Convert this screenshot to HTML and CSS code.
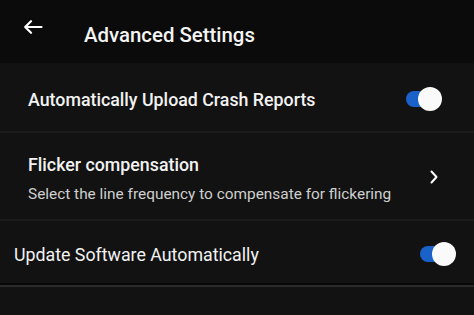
FILE: index.html
```html
<!DOCTYPE html>
<html>
<head>
<meta charset="utf-8">
<link rel="stylesheet" href="styles.css">
</head>
<body>
<div class="screen">
  <header class="header">
    <svg class="back" width="20" height="14" viewBox="0 0 20 14">
      <path d="M18.5 7H2.5M8 1.2L2.2 7L8 12.8" fill="none" stroke="#fff" stroke-width="2.2" stroke-linecap="round" stroke-linejoin="round"/>
    </svg>
    <h1 class="title">Advanced Settings</h1>
  </header>
  <div class="row row-1">
    <span class="label">Automatically Upload Crash Reports</span>
    <span class="switch"><span class="track"></span><span class="knob"></span></span>
  </div>
  <div class="divider"></div>
  <div class="row row-2">
    <div class="texts">
      <span class="label">Flicker compensation</span>
      <span class="sub">Select the line frequency to compensate for flickering</span>
    </div>
    <svg class="chev" width="8" height="14" viewBox="0 0 8 14">
      <path d="M1.5 1.5L6.5 7L1.5 12.5" fill="none" stroke="#fff" stroke-width="2" stroke-linecap="round" stroke-linejoin="round"/>
    </svg>
  </div>
  <div class="divider"></div>
  <div class="row row-3">
    <span class="label regular">Update Software Automatically</span>
    <span class="switch"><span class="track"></span><span class="knob"></span></span>
  </div>
  <div class="bottom-line"></div>
</div>
</body>
</html>
```
FILE: styles.css
```css
html, body {
  margin: 0;
  padding: 0;
  background: #121212;
  font-family: Roboto, "Liberation Sans", sans-serif;
  color: #f2f2f2;
}
.screen {
  width: 474px;
  height: 315px;
  overflow: hidden;
  background: #121212;
}
.header {
  height: 63px;
  background: #0b0b0b;
  display: flex;
  align-items: center;
  padding-left: 23px;
  box-sizing: border-box;
}
.back {
  display: block;
  margin-top: -9px;
}
.title {
  margin: 6px 0 0 41px;
  font-size: 20.4px;
  font-weight: 500;
  color: #f4f4f4;
}
.row {
  display: flex;
  align-items: center;
  justify-content: space-between;
  box-sizing: border-box;
}
.row-1 {
  height: 68px;
  padding: 4px 32px 0 28px;
}
.row-2 {
  height: 86px;
  padding: 0 36px 0 28px;
}
.row-3 {
  height: 62px;
  padding: 4px 18px 0 14px;
}
.label {
  font-size: 17.8px;
  font-weight: 500;
  color: #f2f2f2;
}
.label.regular {
  font-weight: 400;
}
.texts {
  display: flex;
  flex-direction: column;
  gap: 10px;
  margin-top: 5px;
}
.sub {
  font-size: 15.4px;
  color: #cfcfcf;
}
.chev {
  display: block;
  margin-top: 2px;
}
.divider {
  height: 2px;
  background: #1b1b1b;
}
.bottom-line {
  height: 2px;
  background: #080808;
  border-bottom: 2px solid #2b2b2b;
}
.switch {
  position: relative;
  width: 36px;
  height: 24px;
  display: block;
}
.track {
  position: absolute;
  left: 0;
  top: 4px;
  width: 32px;
  height: 16px;
  border-radius: 8px;
  background: #1a62c9;
}
.knob {
  position: absolute;
  right: 0;
  top: 0;
  width: 24px;
  height: 24px;
  border-radius: 50%;
  background: #fafafa;
}
```
